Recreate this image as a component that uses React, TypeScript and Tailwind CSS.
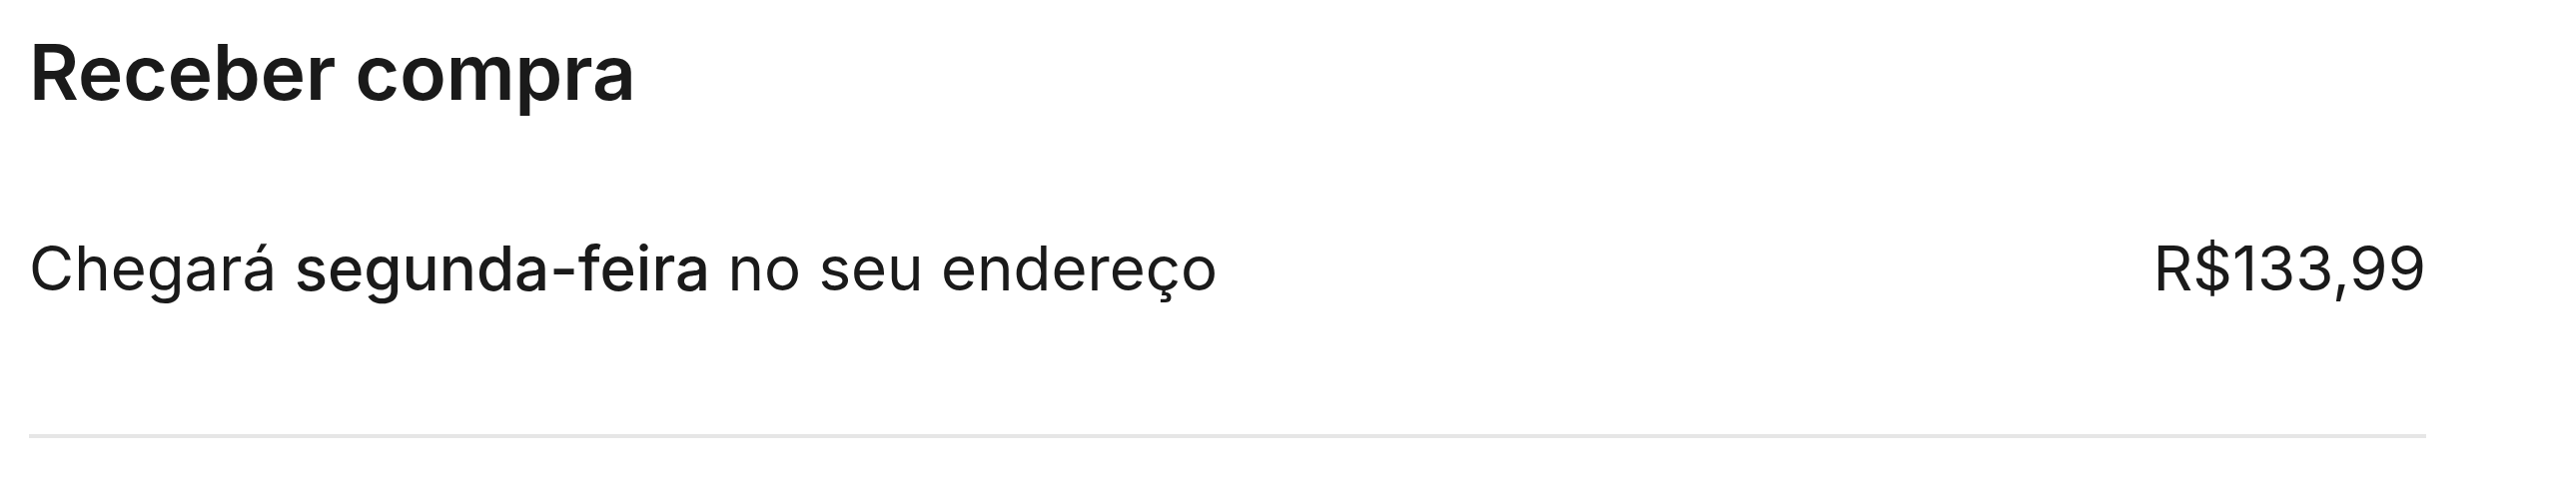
export default function App() {
  return (
    <div className="min-h-[500px] bg-white" style={{ fontFamily: 'Inter, "Liberation Sans", sans-serif' }}>
      <div className="ml-[29px] w-[2400px] pt-[24px] text-[#1a1a1a]">
        <h2 className="text-[76.5px] leading-[96px] font-semibold">Receber compra</h2>
        <div className="mt-[109px] flex items-baseline justify-between text-[61.8px] leading-[80px]">
          <p>
            Chegará <span className="font-medium">segunda-feira</span> no seu endereço
          </p>
          <span>R$133,99</span>
        </div>
        <div className="mt-[126px] h-[4px] bg-[#e6e6e6]" />
      </div>
    </div>
  );
}
